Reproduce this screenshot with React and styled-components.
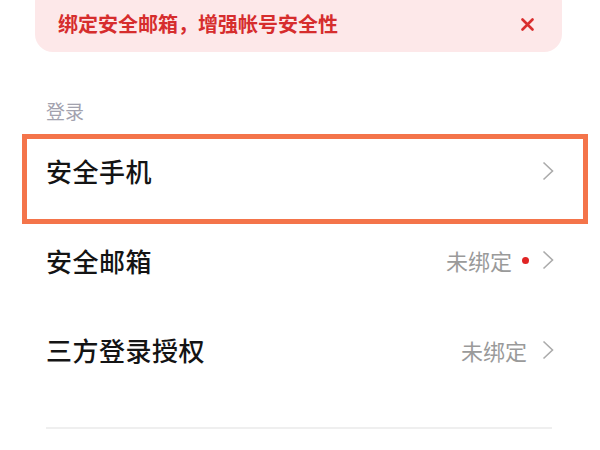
import React from "react";
import styled, { createGlobalStyle } from "styled-components";

const GlobalStyle = createGlobalStyle`
	html, body {
		margin: 0;
		padding: 0;
		background: #ffffff;
	}
	body {
		font-family: "Noto Sans CJK SC", "Noto Sans", sans-serif;
		overflow: hidden;
	}
`;

const Page = styled.div`
	width: 600px;
	height: 450px;
	overflow: hidden;
	background: #ffffff;
`;

const Banner = styled.div`
	margin: -16px 38px 0 35px;
	height: 68px;
	border-radius: 18px;
	background: #fde8e9;
	display: flex;
	align-items: center;
	justify-content: space-between;
	padding: 0 28px 0 23px;
	box-sizing: border-box;
`;

const BannerText = styled.span`
	color: #d62d2d;
	font-size: 20px;
	font-weight: 700;
	line-height: 24px;
	margin-top: 12px;
`;

const CloseIcon = styled.svg`
	width: 13px;
	height: 13px;
	margin-top: 12px;
`;

const Section = styled.div`
	padding: 0 46px;
`;

const SectionLabel = styled.div`
	margin-top: 47px;
	margin-bottom: 3px;
	font-size: 19px;
	line-height: 24px;
	color: #a2a2ae;
`;

const Row = styled.div`
	position: relative;
	height: 89.5px;
	display: flex;
	align-items: center;
	justify-content: space-between;
`;

const Title = styled.span`
	font-size: 26px;
	font-weight: 500;
	color: #141414;
	letter-spacing: 0.5px;
`;

const Right = styled.div`
	display: flex;
	align-items: center;
`;

const Status = styled.span`
	font-size: 22px;
	color: #9a9a9a;
	margin-right: ${({ $dot }) => ($dot ? "10px" : "15px")};
`;

const Dot = styled.span`
	width: 7px;
	height: 7px;
	border-radius: 50%;
	background: #e02424;
	margin-right: 13px;
`;

const Chevron = styled.svg`
	width: 12px;
	height: 20px;
	display: block;
`;

const Highlight = styled.div`
	position: absolute;
	top: 7.5px;
	bottom: -8.5px;
	left: -24px;
	right: -34px;
	border: 5px solid #f4744a;
	pointer-events: none;
`;

const Divider = styled.div`
	margin-top: 32px;
	margin-right: 2px;
	height: 2px;
	background: #efefef;
`;

function Arrow() {
	return (
		<Chevron viewBox="0 0 12 20" fill="none">
			<path d="M1.5 1.5 L10.5 10 L1.5 18.5" stroke="#ababab" strokeWidth="1.6" />
		</Chevron>
	);
}

const items = [
	{ title: "安全手机", highlight: true },
	{ title: "安全邮箱", status: "未绑定", dot: true },
	{ title: "三方登录授权", status: "未绑定" },
];

export default function App() {
	return (
		<Page>
			<GlobalStyle />
			<Banner>
				<BannerText>绑定安全邮箱，增强帐号安全性</BannerText>
				<CloseIcon viewBox="0 0 13 13">
					<path d="M1.5 1.5 L11.5 11.5 M11.5 1.5 L1.5 11.5" stroke="#d92e2e" strokeWidth="2.6" strokeLinecap="round" />
				</CloseIcon>
			</Banner>
			<Section>
				<SectionLabel>登录</SectionLabel>
				{items.map((item) => (
					<Row key={item.title}>
						<Title>{item.title}</Title>
						<Right>
							{item.status && <Status $dot={item.dot}>{item.status}</Status>}
							{item.dot && <Dot />}
							<Arrow />
						</Right>
						{item.highlight && <Highlight />}
					</Row>
				))}
				<Divider />
			</Section>
		</Page>
	);
}
